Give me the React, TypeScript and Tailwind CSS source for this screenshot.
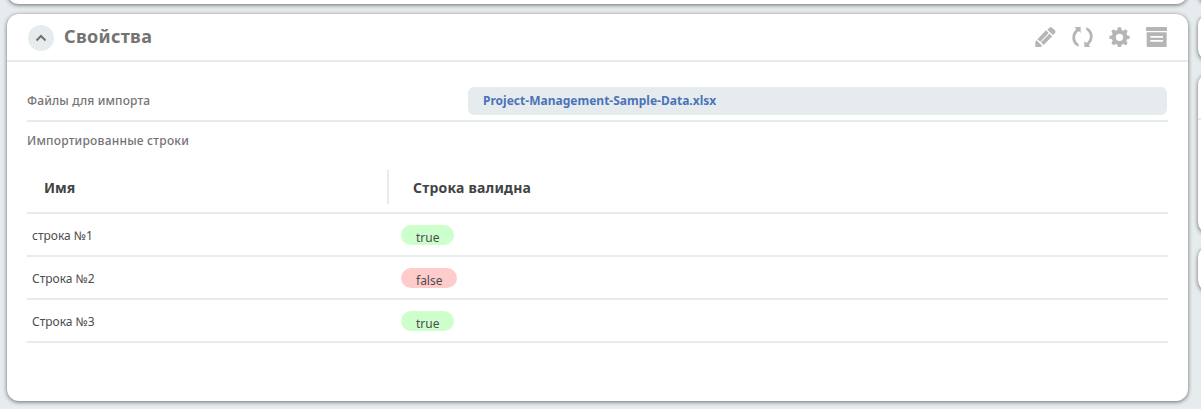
import type { ReactNode } from "react";

const rows = [
  { name: "строка №1", valid: true },
  { name: "Строка №2", valid: false },
  { name: "Строка №3", valid: true },
];

const cardShadow = "bg-white shadow-[0_1px_4px_rgba(0,0,0,0.55)]";

function Icon({ label, children }: { label: string; children: ReactNode }) {
  return (
    <button type="button" aria-label={label} className="h-5 w-[21px]">
      <svg viewBox="0 0 63 60" className="block h-5 w-[21px] fill-[#b5b5b5]">
        {children}
      </svg>
    </button>
  );
}

function Toolbar() {
  return (
    <div className="flex gap-4">
      <Icon label="edit">
        <path d="M1 60V44L5 40L21 56L17 60Z" />
        <path d="M43 2Q47 -2 51 2L60 10Q63 14 60 18L54 24L37 8Z" />
        <path d="M33 10L41 18L16 44L7 37Z" />
        <path d="M43 20L52 28L26 54L18 46Z" />
      </Icon>
      <Icon label="refresh">
        <path d="M8 0H26V18L20 12C6 22 6 42 20 51V59C-4 50 -4 21 13 6Z" />
        <path d="M55 60H37V42L43 48C57 38 57 18 43 9V1C67 10 67 39 50 54Z" />
      </Icon>
      <Icon label="settings">
        <path
          fillRule="evenodd"
          d="M26 1H36L38 9L43 11L50 7L56 13L52 20L54 25L62 27V35L54 37L52 42L56 49L50 55L43 51L38 53L36 60H27L25 53L20 51L13 55L7 49L11 42L9 37L1 35V27L9 25L11 20L7 13L13 7L20 11L25 9ZM31.5 20A11 11 0 1 0 31.5 42A11 11 0 1 0 31.5 20Z"
        />
      </Icon>
      <Icon label="menu">
        <path d="M4 0H59Q63 0 63 4V12H0V4Q0 0 4 0Z" />
        <path
          fillRule="evenodd"
          d="M2 16H62V56Q62 60 58 60H6Q2 60 2 56ZM13 27V32H51V27ZM13 39V44H51V39Z"
        />
      </Icon>
    </div>
  );
}

export default function App() {
  return (
    <div className="flex h-[409px] w-full gap-[10px] overflow-hidden bg-[#e6ebed] pl-[7px] font-['Noto_Sans',sans-serif]">
      <div className="flex w-[1181px] shrink-0 flex-col gap-[10px]">
        <div className={`-mt-6 h-7 shrink-0 rounded-xl ${cardShadow}`} />
        <section className={`h-[387px] shrink-0 rounded-xl ${cardShadow}`}>
          <header className="flex h-12 items-center border-b-2 border-[#e6ecec] pr-[21px] pl-[21px]">
            <button
              type="button"
              aria-label="collapse"
              className="mt-0.5 flex size-[26px] items-center justify-center rounded-full bg-[#e6ecee]"
            >
              <svg viewBox="0 0 12 8" className="h-2 w-3 fill-none stroke-[#707070] stroke-2">
                <path d="M1.5 6.5L6 2L10.5 6.5" />
              </svg>
            </button>
            <h2 className="mb-0.5 ml-[10px] grow text-lg leading-6 font-bold tracking-[0.32px] text-[#747474]">Свойства</h2>
            <Toolbar />
          </header>
          <div className="px-5 pt-[25px]">
            <div className="flex h-[35px] items-start border-b-2 border-[#e6ecec]">
              <span className="w-[441px] text-xs leading-7 font-medium tracking-[0.14px] text-[#747474]">
                Файлы для импорта
              </span>
              <div className="h-7 w-[699px] rounded-md bg-[#e6ecee] pl-[15px] text-xs leading-7 font-bold tracking-[0.01px] text-[#4b73b9]">
                Project-Management-Sample-Data.xlsx
              </div>
            </div>
            <div className="pt-[10px] text-xs leading-[18px] font-medium tracking-[0.22px] text-[#747474]">
              Импортированные строки
            </div>
            <div className="mt-[17px] h-[47px] border-b-2 border-[#e6ecec]">
              <div className="flex pt-[3px] text-sm leading-8 font-bold text-[#444444]">
                <div className="w-[362px] border-r-2 border-[#e6ecec] pt-0.5 pl-[17px]">Имя</div>
                <div className="pt-0.5 pl-6 tracking-[0.2px]">Строка валидна</div>
              </div>
            </div>
            {rows.map((row) => (
              <div key={row.name} className="flex h-[43px] border-b-2 border-[#e6ecec] text-xs text-[#4c4c4c]">
                <div className="w-[374px] pl-[5px] leading-[43px]">{row.name}</div>
                <div
                  className={`mt-[11px] h-5 rounded-[10px] px-[15px] leading-[26px] ${row.valid ? "bg-[#ccffcc]" : "bg-[#ffcccc]"}`}
                >
                  {String(row.valid)}
                </div>
              </div>
            ))}
          </div>
        </section>
      </div>
      <div className="flex w-10 shrink-0 flex-col">
        <div className={`-mt-6 h-7 shrink-0 rounded-xl ${cardShadow}`} />
        <div className={`mt-[10px] h-[47px] shrink-0 rounded-xl ${cardShadow}`} />
        <div className={`mt-3 h-[161px] shrink-0 rounded-xl pt-[45px] ${cardShadow}`}>
          <div className="h-0.5 bg-[#e6ecec]" />
        </div>
        <div className={`mt-3 h-[46px] shrink-0 rounded-xl ${cardShadow}`} />
      </div>
    </div>
  );
}
